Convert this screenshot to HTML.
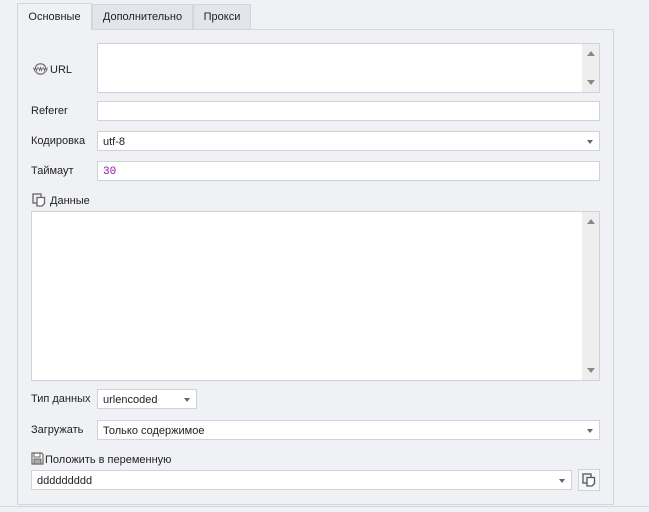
<!DOCTYPE html>
<html><head><meta charset="utf-8"><style>
*{box-sizing:border-box;margin:0;padding:0}
body{width:649px;height:512px;background:#f0f1f5;font-family:"Liberation Sans",sans-serif;font-size:11px;color:#222;position:relative;overflow:hidden}
.a{position:absolute}
.tab{position:absolute;border:1px solid #d3d6dc;border-bottom:none;background:#e3e5ea;text-align:center;color:#222}
.box{position:absolute;background:#fff;border:1px solid #cfd2d8}
.lbl{position:absolute;line-height:14px}
.txt{position:absolute;left:5px;top:4px;line-height:13px}
.dd{position:absolute;right:6px;top:8px;width:0;height:0;border-left:3.5px solid transparent;border-right:3.5px solid transparent;border-top:4px solid #666}
.sb{position:absolute;right:0;top:0;bottom:0;width:17px;background:#eeeeee}
.up{position:absolute;left:5px;top:7px;border-left:4px solid transparent;border-right:4px solid transparent;border-bottom:5px solid #888}
.dn{position:absolute;left:5px;bottom:7px;border-left:4px solid transparent;border-right:4px solid transparent;border-top:5px solid #888}
</style></head><body>
<div class="a" style="left:17px;top:29px;width:597px;height:476px;border:1px solid #d3d6dc;background:#f0f1f5"></div>
<div class="a" style="left:0;top:506px;width:649px;height:1px;background:#d3d6dc"></div>
<div class="tab" style="left:17px;top:3px;width:75px;height:27px;background:#f0f1f5;line-height:27px">Основные</div>
<div class="tab" style="left:92px;top:4px;width:101px;height:25px;line-height:25px">Дополнительно</div>
<div class="tab" style="left:193px;top:4px;width:58px;height:25px;line-height:25px">Прокси</div>

<svg class="a" style="left:33px;top:63px" width="15" height="12" viewBox="0 0 15 12"><path d="M2.5 4A5.5 5.5 0 0 1 12.5 4M2.5 8A5.5 5.5 0 0 0 12.5 8" fill="none" stroke="#777" stroke-width="1.3"/><path d="M0.5 4.5l1 3 1-3 1 3 1-3M5.5 4.5l1 3 1-3 1 3 1-3M10.5 4.5l1 3 1-3 1 3 1-3" fill="none" stroke="#666" stroke-width="0.9"/></svg>
<div class="lbl" style="left:50px;top:63px">URL</div>
<div class="box" style="left:97px;top:43px;width:503px;height:50px"><div class="sb"><div class="up"></div><div class="dn"></div></div></div>

<div class="lbl" style="left:31px;top:104px">Referer</div>
<div class="box" style="left:97px;top:101px;width:503px;height:20px"></div>

<div class="lbl" style="left:31px;top:134px">Кодировка</div>
<div class="box" style="left:97px;top:131px;width:503px;height:20px"><div class="txt">utf-8</div><div class="dd"></div></div>

<div class="lbl" style="left:31px;top:164px">Таймаут</div>
<div class="box" style="left:97px;top:161px;width:503px;height:20px"><div class="txt" style="color:#8a1a9a;font-family:'Liberation Mono',monospace;font-size:11px">30</div></div>

<svg class="a" style="left:32px;top:193px" width="14" height="14" viewBox="0 0 14 14"><rect x="1" y="1" width="8" height="9" fill="#f0f1f5" stroke="#666" stroke-width="1.3"/><path d="M5 4.5h7.5v6l-2.5 2.5H5z" fill="#fff" stroke="#666" stroke-width="1.3"/></svg>
<div class="lbl" style="left:50px;top:194px">Данные</div>
<div class="box" style="left:31px;top:211px;width:569px;height:170px"><div class="sb"><div class="up"></div><div class="dn"></div></div></div>

<div class="lbl" style="left:31px;top:392px">Тип данных</div>
<div class="box" style="left:97px;top:389px;width:100px;height:20px"><div class="txt">urlencoded</div><div class="dd"></div></div>

<div class="lbl" style="left:31px;top:423px">Загружать</div>
<div class="box" style="left:97px;top:420px;width:503px;height:20px"><div class="txt">Только содержимое</div><div class="dd"></div></div>

<svg class="a" style="left:31px;top:452px" width="13" height="13" viewBox="0 0 13 13"><path d="M1 1h9.5l1.5 1.5V12H1z" fill="#fff" stroke="#666" stroke-width="1.2"/><rect x="3" y="1" width="6" height="4" fill="none" stroke="#666"/><rect x="3" y="7" width="7" height="5" fill="#aaa" stroke="#666"/></svg>
<div class="lbl" style="left:45px;top:453px">Положить в переменную</div>
<div class="box" style="left:31px;top:470px;width:541px;height:20px"><div class="txt">ddddddddd</div><div class="dd"></div></div>
<div class="box" style="left:578px;top:469px;width:22px;height:22px;background:#f6f7f9">
<svg class="a" style="left:3px;top:3px" width="14" height="14" viewBox="0 0 14 14"><rect x="1" y="1" width="8" height="9" fill="#f0f1f5" stroke="#555" stroke-width="1.3"/><path d="M5 4.5h7.5v6l-2.5 2.5H5z" fill="#fff" stroke="#555" stroke-width="1.3"/></svg></div>
</body></html>
